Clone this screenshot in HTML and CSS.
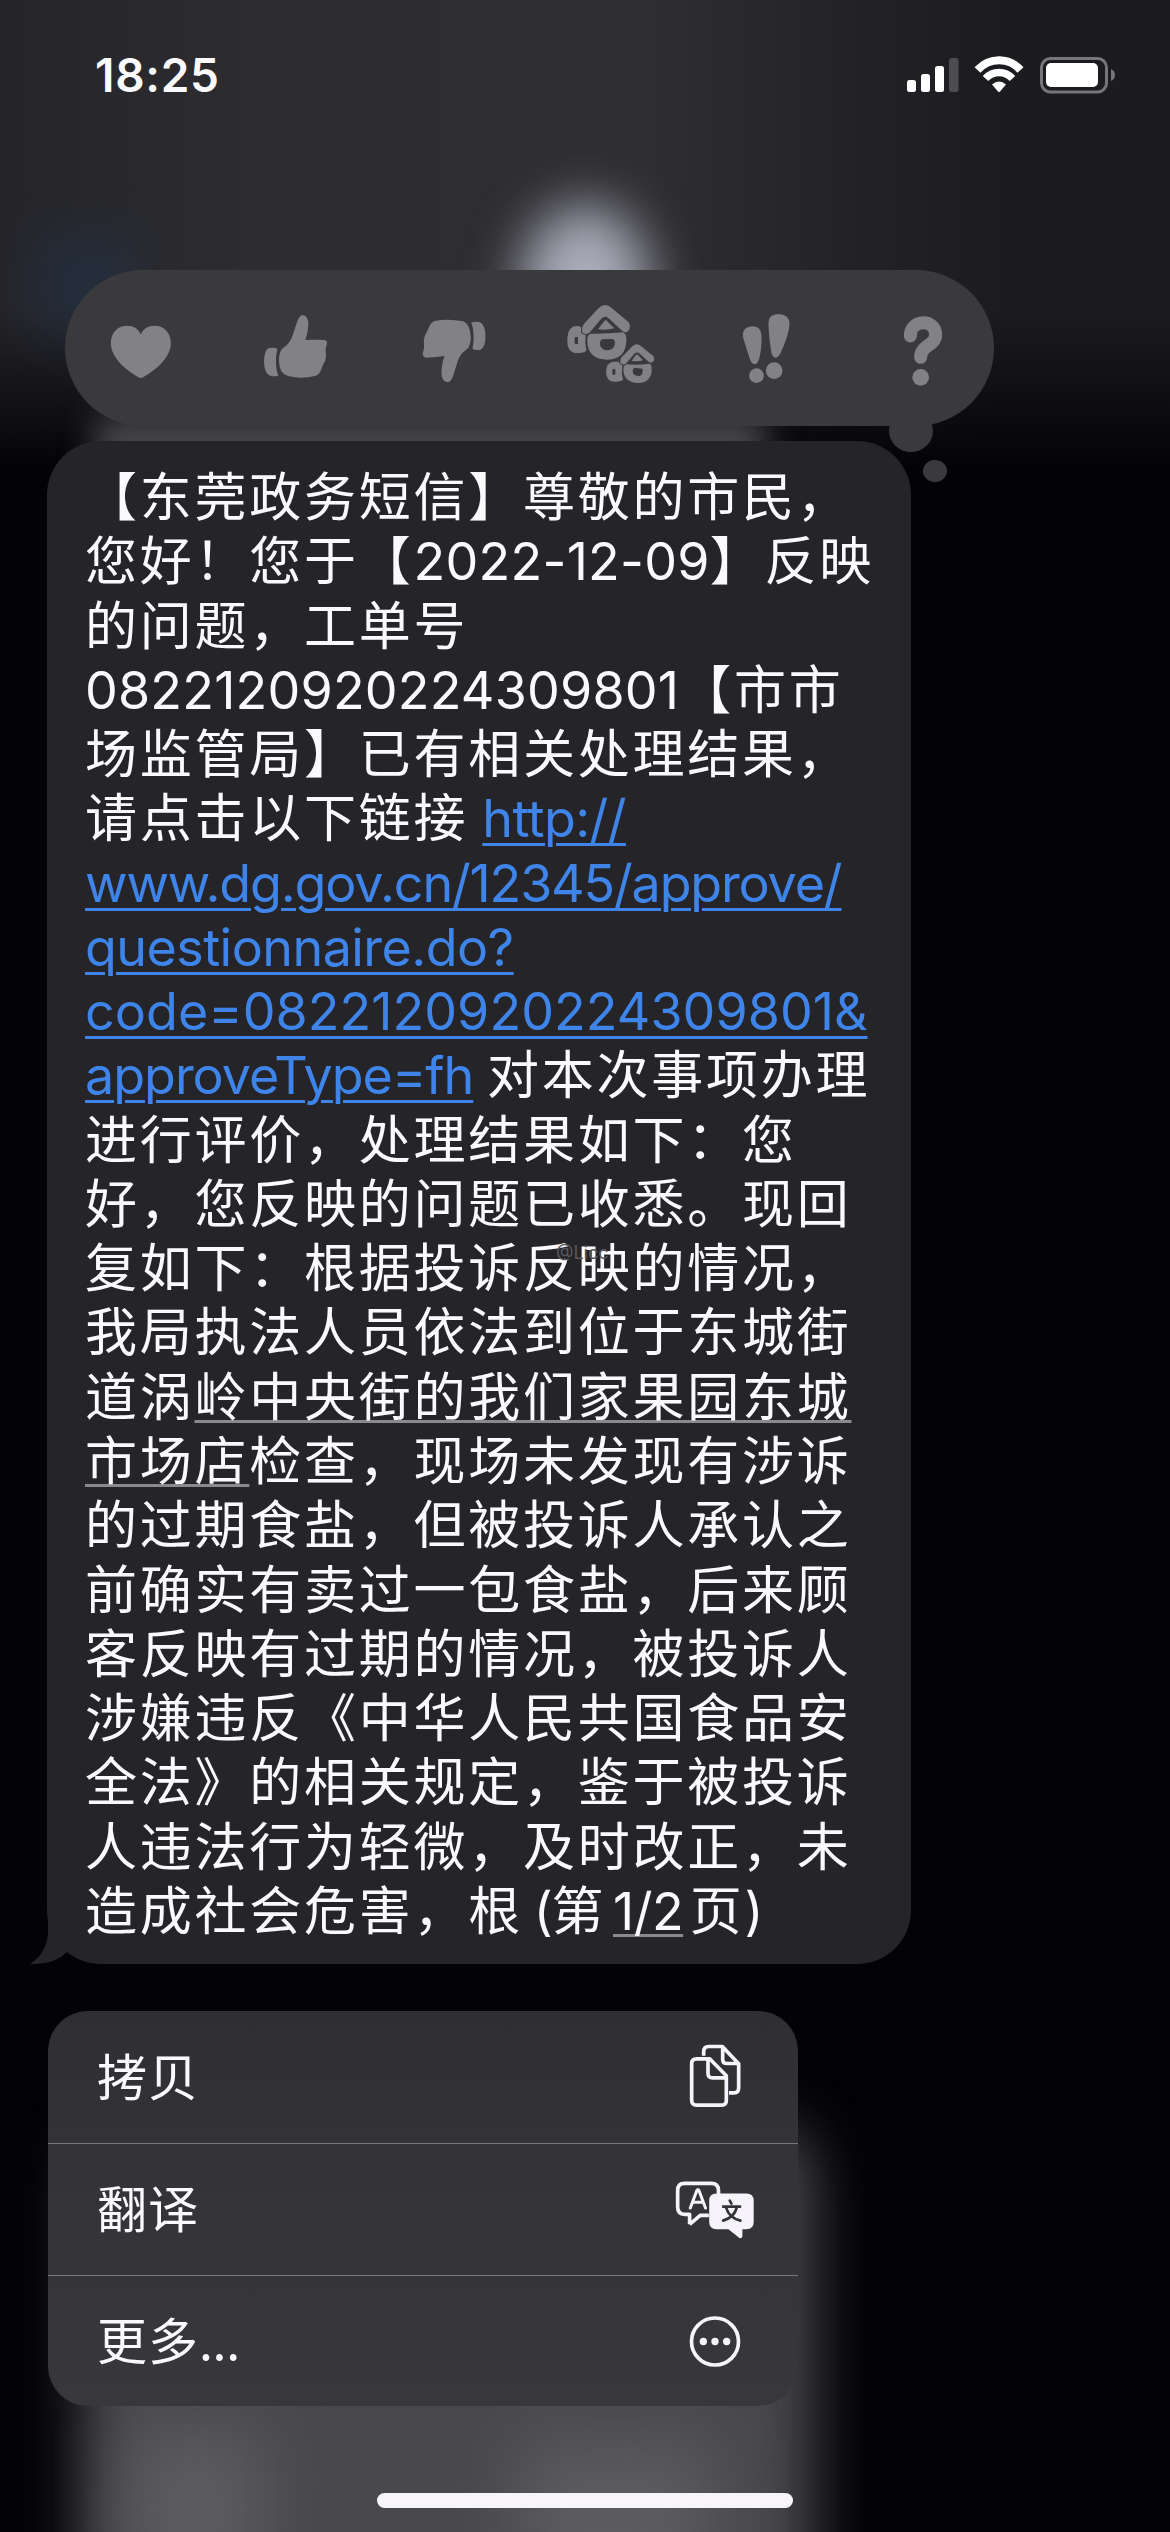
FILE: index.html
```html
<!DOCTYPE html>
<html lang="zh-CN">
<head>
<meta charset="utf-8">
<title>信息</title>
<link rel="stylesheet" href="styles.css">
</head>
<body>
<main class="screen">
  <div class="backdrop"><i class="glow avatar"></i><i class="glow blue"></i><i class="glow band"></i><i class="glow below"></i><i class="glow below-l"></i><i class="glow below-r"></i></div>

  <header class="status">
    <span class="time">18:25</span>
    <svg class="status-icons" viewBox="907 54 209 39" aria-hidden="true">
      <g fill="#fff"><rect x="907" y="79" width="9" height="12" rx="2.5"/><rect x="921" y="73" width="9" height="18" rx="2.5"/><rect x="935" y="65" width="9" height="26" rx="2.5"/></g>
      <rect x="949" y="57" width="9.500" height="34" rx="2.500" fill="#4d4d51"/>
      <g fill="none" stroke="#fff"><path d="M977.500 69C989.500 56 1009 56 1020.500 69" stroke-width="8"/><path d="M985.500 77.500C993 69.500 1005 69.500 1012.500 77.500" stroke-width="7.500"/></g>
      <path d="M992 83.500Q999 77.500 1006 83.500L1000 90.500Q999 91.500 998 90.500Z" fill="#fff"/>
      <rect x="1041.500" y="57.500" width="65" height="33.500" rx="9" fill="none" stroke="#77777b" stroke-width="3"/>
      <rect x="1046" y="62" width="52" height="24" rx="5" fill="#fff"/>
      <path d="M1111 68Q1115 70 1115 74Q1115 78 1111 80Z" fill="#77777b"/>
    </svg>
  </header>

  <section class="tapbacks">
    <svg viewBox="91.5 30 300 468"><path d="M241 224C230 185 151 184 151 250C151 292 195 330 234 352Q241 356 248 352C287 330 331 292 331 250C331 184 252 185 241 224Z"/></svg>
    <svg viewBox="561 30 300 468"><path d="M728 165Q746 168 745 195Q744 220 736 240Q765 238 793 240Q803 242 801 252L797 265L798 290Q797 305 790 312L784 328Q778 345 765 348Q722 358 684 348Q658 342 657 302Q657 270 672 262Q690 250 697 228L712 184Q718 166 728 165Z"/><path d="M627 264Q645 262 652 266Q647 285 648 310Q649 335 655 347Q645 350 630 347Q613 340 612 305Q612 270 627 264Z"/></svg>
    <svg viewBox="1030.500 30 300 468"><path d="M1160 367Q1142 364 1143 337Q1144 308 1152 288Q1120 293 1096 293Q1084 289 1087 280L1091 262L1090 245Q1091 226 1098 218L1106 200Q1112 185 1125 182Q1168 176 1208 184Q1228 190 1231 232Q1230 262 1216 271Q1200 280 1192 302L1177 350Q1171 366 1160 367Z"/><path d="M1260 269Q1244 272 1236 266Q1241 245 1239 222Q1238 200 1232 188Q1241 183 1257 186Q1274 193 1275 228Q1275 262 1260 269Z"/></svg>
    <svg viewBox="60 30 300 468"><path d="M195 135Q206 135 216 145L266 187Q276 204 262 215Q256 219 247 213L205 174Q195 166 185 175L151 215Q140 228 128 218Q123 206 131 193L176 144Q185 135 195 135Z"/><path d="M197 179L223 205Q200 212 174 208Q186 190 197 179Z"/><path fill-rule="evenodd" d="M151 221Q202 222 250 217Q260 222 259 243Q257 298 202 299Q143 297 142 245Q141 224 151 221ZM187 238Q177 244 180 255Q184 271 204 271Q225 269 225 247Q224 236 213 237Z"/><path fill-rule="evenodd" d="M110 198Q119 198 124 202L123 215Q126 224 137 224Q134 248 139 272Q132 279 111 279Q82 279 82 242Q82 199 110 198ZM105 231Q102 242 105 252H114V231Z"/><path d="M289 253Q298 252 307 262L340 288Q346 299 338 306Q332 310 324 304L298 280Q290 274 283 281L259 310Q250 318 241 309Q239 300 245 292L275 261Q282 254 289 253Z"/><path d="M291 282L309 301Q292 306 275 302Q284 289 291 282Z"/><path fill-rule="evenodd" d="M259 313Q294 316 329 311Q336 314 335 332Q332 368 294 369Q252 367 250 330Q250 316 259 313ZM283 323Q275 330 280 341Q287 349 299 348Q309 344 308 326Z"/><path fill-rule="evenodd" d="M220 305H236Q238 313 247 316Q243 338 249 360Q240 366 222 365Q199 364 198 336Q199 307 220 305ZM218 327Q215 337 218 344H226V327Z"/></svg>
    <svg viewBox="529.500 30 300 468"><path d="M634 199Q660 198 663 225Q664 266 656 296Q651 313 642 313Q633 312 628 297L608 234Q602 203 634 199Z"/><circle cx="648" cy="347" r="22"/><path d="M714 162Q746 163 747 191Q746 225 719 281Q712 293 705 293Q696 292 693 279Q684 225 684 188Q684 163 714 162Z"/><circle cx="701" cy="332" r="25"/></svg>
    <svg viewBox="999 30 300 468"><path d="M1111 228C1111 176 1187 176 1187 224C1187 258 1142 254 1142 292" fill="none" stroke="#828284" stroke-width="39" stroke-linecap="round"/><circle cx="1142" cy="352" r="25"/></svg>
    <i class="dot big"></i><i class="dot small"></i>
  </section>

  <article class="bubble">
    <svg class="tail" viewBox="0 0 50 60" aria-hidden="true"><path d="M24 0V30Q22 50 6 60Q30 61 43 48L34 0Z" fill="#252529"/></svg>
    <span class="mark">@Licc</span>
    <p>【东莞政务短信】尊敬的市民，</p>
    <p>您好！您于【<span class="n a">2022-12-09</span>】反映</p>
    <p>的问题，工单号</p>
    <p><span class="n b">0822120920224309801</span>【市市</p>
    <p>场监管局】已有相关处理结果，</p>
    <p>请点击以下链接<a class="n c"> <u>http://</u></a></p>
    <p><a class="n d"><u>www.dg.gov.cn/12345/approve/</u></a></p>
    <p><a class="n e"><u>questionnaire.do?</u></a></p>
    <p><a class="n f"><u>code=0822120920224309801&amp;</u></a></p>
    <p><a class="n g"><u>approveType=fh</u> </a>对本次事项办理</p>
    <p>进行评价，处理结果如下：您</p>
    <p>好，您反映的问题已收悉。现回</p>
    <p>复如下：根据投诉反映的情况，</p>
    <p>我局执法人员依法到位于东城街</p>
    <p>道涡<span class="det">岭中央街的我们家果园东城</span></p>
    <p><span class="det">市场店</span>检查，现场未发现有涉诉</p>
    <p>的过期食盐，但被投诉人承认之</p>
    <p>前确实有卖过一包食盐，后来顾</p>
    <p>客反映有过期的情况，被投诉人</p>
    <p>涉嫌违反《中华人民共国食品安</p>
    <p>全法》的相关规定，鉴于被投诉</p>
    <p>人违法行为轻微，及时改正，未</p>
    <p>造成社会危害，根<span class="n open"> (</span>第<span class="n page"> <span class="det skip">1/2</span> </span>页<span class="n">)</span></p>
  </article>

  <nav class="menu">
    <div class="row"><span>拷贝</span>
      <svg viewBox="13 35 180 200" fill="none" stroke="#f6f4fa" stroke-width="11" stroke-linejoin="round"><path d="M69 70V58Q69 42 84 42H125L174 94V166Q174 181 160 181H145M126 44V80Q126 93 139 93H173"/><path d="M48 79H87L137 130V204Q137 218 123 218H48Q33 218 33 204V93Q33 79 48 79ZM82 80V122Q82 136 96 136H136"/></svg></div>
    <div class="row"><span>翻译</span>
      <svg class="wide" viewBox="100 524 250 210"><path d="M147 672V642H132Q111 642 111 620V571Q111 549 132 549H212Q234 549 234 571V582M205 645H179L147 672" fill="none" stroke="#f6f4fa" stroke-width="11" stroke-linejoin="round"/><path d="M149 623L169 570Q172 564 175 570L195 623M157 606H187" fill="none" stroke="#f6f4fa" stroke-width="9" stroke-linecap="round"/><path d="M228 579H318Q340 579 340 601V665Q340 687 318 687H306V708Q304 716 297 713L264 687H228Q206 687 206 665V601Q206 579 228 579Z" fill="#f6f4fa"/><path d="M268 601L273 610M248 619H299M248 661Q282 651 289 622M257 622Q266 653 300 661" fill="none" stroke="#343437" stroke-width="8" stroke-linecap="round"/></svg></div>
    <div class="row"><span>更多<span class="dots">...</span></span>
      <svg viewBox="13 0 180 180"><circle cx="103" cy="90" r="70.500" fill="none" stroke="#f6f4fa" stroke-width="11"/><g fill="#f6f4fa"><circle cx="68" cy="90" r="11"/><circle cx="103" cy="90" r="11"/><circle cx="138" cy="90" r="11"/></g></svg></div>
  </nav>
  <div class="home"></div>
</main>
</body>
</html>
```
FILE: styles.css
```css
* { box-sizing: border-box; margin: 0; }
body { background: #030307; }
.screen {
  position: relative;
  width: 1170px;
  height: 2532px;
  overflow: hidden;
  display: flex;
  flex-direction: column;
  align-items: flex-start;
  color: #fafafc;
  font-family: "Inter", "Noto Sans CJK SC", sans-serif;
}
.backdrop {
  position: absolute;
  inset: 0;
  background:
    linear-gradient(180deg, transparent 0 310px, #030307 470px),
    linear-gradient(90deg, #252529 0, #2d2d31 260px, #2f2f32 640px, #232327 850px, #1c1c20 1000px, #1c1c20 100%);
}
.glow { position: absolute; display: block; }
.avatar { left: 520px; top: 205px; width: 130px; height: 170px; border-radius: 50%; background: #aaacba; filter: blur(26px); }
.blue { left: 35px; top: 235px; width: 100px; height: 100px; background: #20324a; opacity: .5; filter: blur(22px); }
.band { left: 95px; top: 416px; width: 670px; height: 60px; background: #47474a; filter: blur(16px); }
.below { left: 80px; top: 2120px; width: 735px; height: 520px; border-radius: 60px; background: #49494d; filter: blur(28px); }
.below-l { left: 130px; top: 2430px; width: 130px; height: 160px; background: #5c5c61; filter: blur(34px); }
.below-r { left: 520px; top: 2440px; width: 190px; height: 160px; background: #5c5c60; filter: blur(34px); }

.status {
  position: relative;
  width: 100%;
  height: 148px;
  padding: 0 54px 0 95px;
  display: flex;
  justify-content: space-between;
  align-items: center;
}
.time { font-size: 46px; font-weight: 600; letter-spacing: .7px; line-height: 60px; padding-top: 1px; }
.status-icons { width: 209px; height: 39px; }

.tapbacks {
  position: relative;
  margin: 122px 0 0 65px;
  width: 929px;
  height: 156px;
  border-radius: 78px;
  background: #3a3a3c;
  display: flex;
  gap: 56.5px;
  padding-left: 25.5px;
}
.tapbacks svg { flex: none; width: 100px; height: 156px; fill: #828284; }
.dot { position: absolute; border-radius: 50%; background: #3a3a3c; }
.big { left: 824px; top: 140px; width: 44px; height: 42px; }
.small { left: 858px; top: 190px; width: 24px; height: 22px; }

.bubble {
  position: relative;
  margin: 15px 0 0 47px;
  width: 864px;
  height: 1523px;
  border-radius: 54px;
  background: #252529;
  padding: 21px 0 0 38px;
}
.tail { position: absolute; left: -23px; bottom: 0; width: 50px; height: 60px; }
.mark { position: absolute; left: 509px; top: 800px; font-size: 18px; line-height: 24px; color: #58585c; }
.bubble p {
  height: 64.27px;
  line-height: 64.27px;
  font-family: "Noto Sans CJK SC", sans-serif;
  font-size: 52px;
  letter-spacing: 2.75px;
  white-space: pre;
  text-spacing-trim: space-all;
}
.n { font-family: "Inter", sans-serif; font-size: 52px; letter-spacing: -1px; }
.a { letter-spacing: .25px; }
.b { letter-spacing: .2px; }
.c { letter-spacing: -.6px; }
.d { letter-spacing: -1.15px; }
.e { letter-spacing: -.55px; }
.f { letter-spacing: .05px; }
.open { word-spacing: -3px; }
.page { word-spacing: -7.5px; letter-spacing: -.5px; }
.bubble a { color: #3f84e8; }
.bubble u { text-decoration-thickness: 3px; text-underline-offset: 6px; }
.det { text-decoration: underline #8a8a8e 3px; text-underline-offset: 4px; text-decoration-skip-ink: none; }
.skip { text-decoration-skip-ink: auto; }

.menu {
  position: relative;
  margin: 47px 0 0 48px;
  width: 750px;
  height: 395px;
  border-radius: 40px;
  overflow: hidden;
  background: linear-gradient(#2f2f31, #343437 40%, #38383a);
}
.row {
  height: 132px;
  padding: 0 53px 0 49px;
  display: flex;
  align-items: center;
  justify-content: space-between;
  font-family: "Noto Sans CJK SC", sans-serif;
  font-size: 50px;
  letter-spacing: 1px;
}
.row > span { padding-bottom: 7px; }
.dots { letter-spacing: -.3px; }
.row + .row { border-top: 1px solid #77777a; }
.row svg { width: 60px; height: 67px; overflow: visible; }
.row .wide { width: 83px; height: 70px; margin-right: -12px; }

.home {
  position: absolute;
  left: 377px;
  bottom: 24px;
  width: 416px;
  height: 15px;
  border-radius: 8px;
  background: #f7f5fa;
}
```
